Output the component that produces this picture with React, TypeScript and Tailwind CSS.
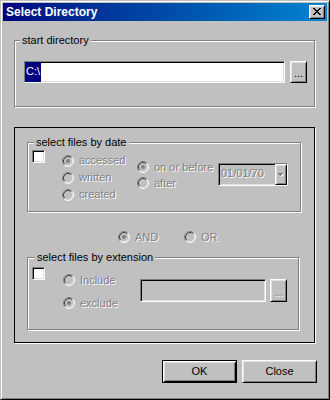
import React from "react";

const raised =
  "border border-t-white border-l-white border-r-black border-b-black shadow-[inset_1px_1px_0_#dfdfdf,inset_-1px_-1px_0_#808080]";
const sunken =
  "border border-t-[#808080] border-l-[#808080] border-r-white border-b-white shadow-[inset_1px_1px_0_#000,inset_-1px_-1px_0_#dfdfdf]";
const disabledText = "text-[#808080] [text-shadow:1px_1px_0_#fff]";

function Radio({ checked }: { checked?: boolean }) {
  return (
    <svg width="12" height="12" viewBox="0 0 12 12" className="shrink-0">
      <circle cx="6" cy="6" r="4.2" fill="#c0c0c0" />
      <path d="M2.11 9.89 A5.5 5.5 0 0 1 9.89 2.11" fill="none" stroke="#808080" strokeWidth="1" />
      <path d="M9.89 2.11 A5.5 5.5 0 0 1 2.11 9.89" fill="none" stroke="#ffffff" strokeWidth="1" />
      <path d="M2.82 9.18 A4.5 4.5 0 0 1 9.18 2.82" fill="none" stroke="#404040" strokeWidth="1" />
      <path d="M9.18 2.82 A4.5 4.5 0 0 1 2.82 9.18" fill="none" stroke="#dfdfdf" strokeWidth="1" />
      {checked && <circle cx="6" cy="6" r="2" fill="#808080" />}
    </svg>
  );
}

function RadioItem({ label, checked, className }: { label: string; checked?: boolean; className: string }) {
  return (
    <div className={`flex items-center gap-[5px] ${className}`}>
      <Radio checked={checked} />
      <span className={`leading-[13px] whitespace-nowrap ${disabledText}`}>{label}</span>
    </div>
  );
}

function Checkbox() {
  return <div className={`w-[13px] h-[13px] shrink-0 bg-white ${sunken}`} />;
}

function Group({
  legend,
  className,
  legendClass,
  children,
}: {
  legend: string;
  className: string;
  legendClass: string;
  children: React.ReactNode;
}) {
  return (
    <div className={`flex flex-col shrink-0 border border-[#808080] shadow-[1px_1px_0_#fff,inset_1px_1px_0_#fff] ${className}`}>
      <div className={`self-start -mt-[7px] px-[2px] bg-[#c0c0c0] leading-[13px] whitespace-nowrap ${legendClass}`}>
        {legend}
      </div>
      {children}
    </div>
  );
}

function CloseBtn() {
  return (
    <div className={`w-[16px] h-[14px] bg-[#c0c0c0] flex items-start pl-[3px] pt-[2px] ${raised}`}>
      <svg width="8" height="7" viewBox="0 0 8 7" shapeRendering="crispEdges">
        <path
          d="M0 0h2v1H0z M6 0h2v1H6z M1 1h2v1H1z M5 1h2v1H5z M2 2h4v1H2z M3 3h2v1H3z M2 4h4v1H2z M1 5h2v1H1z M5 5h2v1H5z M0 6h2v1H0z M6 6h2v1H6z"
          fill="#000"
        />
      </svg>
    </div>
  );
}

export default function App() {
  return (
    <div className="w-[330px] h-[400px] bg-[#c0c0c0] font-['Liberation_Sans',Arial,sans-serif] text-[11px] leading-[13px] text-black border border-t-[#c0c0c0] border-l-[#c0c0c0] border-r-black border-b-black shadow-[inset_1px_1px_0_#fff,inset_-1px_-1px_0_#808080] p-[2px] flex flex-col overflow-hidden">
      {/* title bar */}
      <div className="h-[18px] shrink-0 flex items-center justify-between pl-[3px] pr-[2px] bg-linear-to-r from-[#000080] to-[#1084d0]">
        <span className="text-white font-bold text-[12px] leading-[18px]">Select Directory</span>
        <CloseBtn />
      </div>

      <div className="flex flex-col pl-[11px]">
        {/* start directory */}
        <Group legend="start directory" className="mt-[19px] w-[301px] h-[67px]" legendClass="ml-[5px]">
          <div className="flex ml-[9px] mt-[14px] gap-[5px]">
            <div className={`w-[261px] h-[22px] bg-white flex items-stretch ${sunken}`}>
              <span className="bg-[#000080] text-white px-[1px] leading-[18px]">C:\</span>
            </div>
            <div className={`w-[17px] h-[22px] flex items-center justify-center ${raised}`}>
              <span className="leading-[13px] mt-[3px]">...</span>
            </div>
          </div>
        </Group>

        {/* filter panel */}
        <div className="mt-[20px] w-[301px] h-[216px] shrink-0 border border-black shadow-[1px_1px_0_#fff] flex flex-col">
          <Group legend="select files by date" className="mt-[14px] ml-[12px] w-[274px] h-[70px]" legendClass="ml-[6px]">
            <div className="flex items-start ml-[4px] mt-[1px]">
              <Checkbox />
              <div className="flex flex-col ml-[17px] mt-[2px] w-[75px] shrink-0">
                <RadioItem label="accessed" checked className="h-[17px]" />
                <RadioItem label="written" className="h-[17px]" />
                <RadioItem label="created" className="h-[17px]" />
              </div>
              <div className="flex flex-col mt-[9px] w-[81px] shrink-0">
                <RadioItem label="on or before" checked className="h-[16px]" />
                <RadioItem label="after" className="h-[16px]" />
              </div>
              <div className={`mt-[13px] w-[70px] h-[23px] shrink-0 bg-[#c0c0c0] flex items-stretch ${sunken}`}>
                <span className={`pl-[2px] leading-[19px] ${disabledText}`}>01/01/70</span>
                <div className={`ml-auto w-[12px] flex items-center justify-center ${raised}`}>
                  <svg width="6" height="4" viewBox="0 0 6 4" shapeRendering="crispEdges">
                    <path d="M1 1h5v1H1z M2 2h3v1H2z M3 3h1v1H3z" fill="#fff" />
                    <path d="M0 0h5v1H0z M1 1h3v1H1z M2 2h1v1H2z" fill="#808080" />
                  </svg>
                </div>
              </div>
            </div>
          </Group>

          <div className="flex mt-[17px] ml-[103px] h-[16px]">
            <RadioItem label="AND" checked className="w-[66px] h-[16px]" />
            <RadioItem label="OR" className="h-[16px]" />
          </div>

          <Group legend="select files by extension" className="mt-[12px] ml-[12px] w-[272px] h-[73px]" legendClass="ml-[7px]">
            <div className="flex items-start ml-[4px] mt-[3px]">
              <Checkbox />
              <div className="flex flex-col gap-[7px] ml-[18px] mt-[5px] w-[77px] shrink-0">
                <RadioItem label="Include" className="h-[16px]" />
                <RadioItem label="exclude" checked className="h-[16px]" />
              </div>
              <div className="flex mt-[12px] gap-[4px]">
                <div className={`w-[126px] h-[23px] bg-[#c0c0c0] ${sunken}`} />
                <div className={`w-[17px] h-[23px] flex items-center justify-center ${raised}`}>
                  <span className={`leading-[13px] mt-[3px] ${disabledText}`}>...</span>
                </div>
              </div>
            </div>
          </Group>
        </div>

        {/* buttons */}
        <div className="flex mt-[17px] ml-[148px] gap-[5px]">
          <div className="w-[75px] h-[23px] border border-black shadow-[inset_1px_1px_0_#fff,inset_-1px_-1px_0_#000,inset_2px_2px_0_#dfdfdf,inset_-2px_-2px_0_#808080] flex items-center justify-center">
            <span className="leading-[13px]">OK</span>
          </div>
          <div className={`w-[75px] h-[23px] flex items-center justify-center ${raised}`}>
            <span className="leading-[13px]">Close</span>
          </div>
        </div>
      </div>
    </div>
  );
}
